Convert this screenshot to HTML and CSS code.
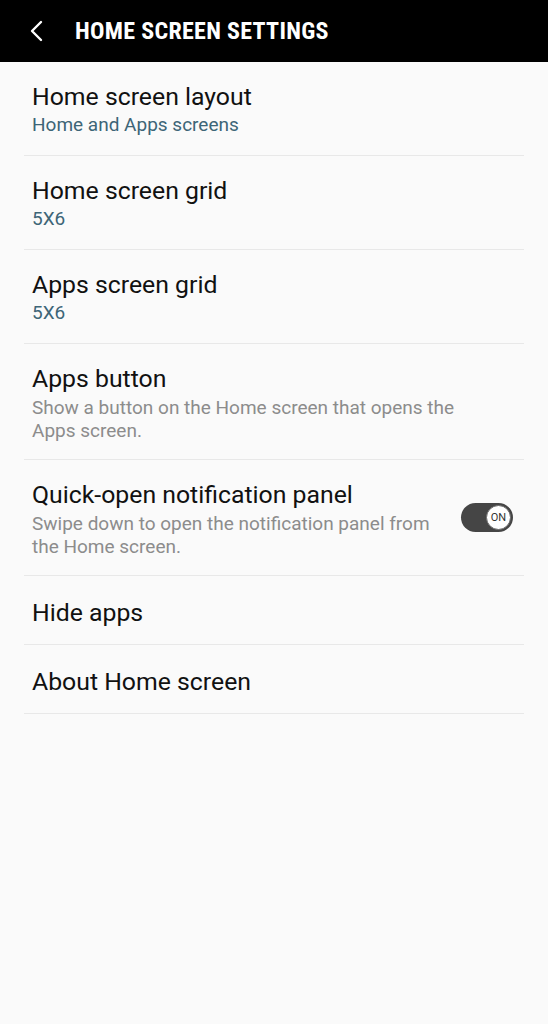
FILE: index.html
```html
<!DOCTYPE html>
<html lang="en">
<head>
    <meta charset="utf-8" />
    <title>Home screen settings</title>
    <link rel="stylesheet" href="styles.css">
</head>
<body>
    <div class="appBar">
        <svg class="backIcon" width="16" height="22" viewBox="0 0 16 22">
            <path d="M12 2 L3 11 L12 20" fill="none" stroke="#fff" stroke-width="2.4" stroke-linecap="round" stroke-linejoin="round"/>
        </svg>
        <h1 class="appTitle">HOME SCREEN SETTINGS</h1>
    </div>

    <div class="settingsList">
        <div class="settingRow">
            <div class="settingText">
                <div class="settingTitle">Home screen layout</div>
                <div class="settingValue">Home and Apps screens</div>
            </div>
        </div>
        <div class="settingRow">
            <div class="settingText">
                <div class="settingTitle">Home screen grid</div>
                <div class="settingValue">5X6</div>
            </div>
        </div>
        <div class="settingRow">
            <div class="settingText">
                <div class="settingTitle">Apps screen grid</div>
                <div class="settingValue">5X6</div>
            </div>
        </div>
        <div class="settingRow tall">
            <div class="settingText">
                <div class="settingTitle">Apps button</div>
                <div class="settingDesc">Show a button on the Home screen that opens the Apps screen.</div>
            </div>
        </div>
        <div class="settingRow tall withSwitch">
            <div class="settingText">
                <div class="settingTitle">Quick-open notification panel</div>
                <div class="settingDesc">Swipe down to open the notification panel from the Home screen.</div>
            </div>
            <div class="toggle">
                <div class="toggleKnob">ON</div>
            </div>
        </div>
        <div class="settingRow short">
            <div class="settingText">
                <div class="settingTitle">Hide apps</div>
            </div>
        </div>
        <div class="settingRow short">
            <div class="settingText">
                <div class="settingTitle">About Home screen</div>
            </div>
        </div>
    </div>
</body>
</html>
```

FILE: styles.css
```css
body {
    margin: 0;
    background-color: #fafafa;
    font-family: Roboto, "Noto Sans", sans-serif;
}
.appBar {
    display: flex;
    align-items: center;
    height: 62px;
    background-color: #000;
    padding-left: 29px;
}
.backIcon {
    display: block;
}
.appTitle {
    margin: 0 0 0 30px;
    color: #fff;
    font-family: "Liberation Sans Narrow", "Roboto Condensed", Roboto, sans-serif;
    font-weight: bold;
    font-size: 24px;
    letter-spacing: 0.3px;
}
.settingsList {
    padding: 0 24px;
}
.settingRow {
    display: flex;
    align-items: center;
    height: 93px;
    border-bottom: 1px solid #e8e8e8;
    padding: 0 8px;
}
.settingRow.tall {
    height: 115px;
}
.settingRow.short {
    height: 68px;
}
.settingText {
    flex: 1;
    padding-top: 2px;
}
.short .settingText {
    padding-top: 5px;
}
.settingTitle {
    font-size: 24.8px;
    color: #111;
    line-height: 30px;
}
.settingValue {
    font-size: 19px;
    color: #3d6577;
    line-height: 26px;
}
.settingDesc {
    font-size: 19px;
    color: #8c8c8c;
    line-height: 23px;
    margin-top: 2px;
    padding-right: 30px;
}
.withSwitch .settingDesc {
    padding-right: 6px;
}
.toggle {
    width: 52px;
    height: 29px;
    border-radius: 15px;
    background-color: #454545;
    display: flex;
    align-items: center;
    justify-content: flex-end;
    padding-right: 2px;
    box-sizing: border-box;
    margin-right: 3px;
}
.toggleKnob {
    width: 25px;
    height: 25px;
    border-radius: 50%;
    background-color: #fff;
    border: 1.5px solid #6a6a6a;
    box-sizing: border-box;
    font-size: 11px;
    color: #333;
    display: flex;
    align-items: center;
    justify-content: center;
}
```
